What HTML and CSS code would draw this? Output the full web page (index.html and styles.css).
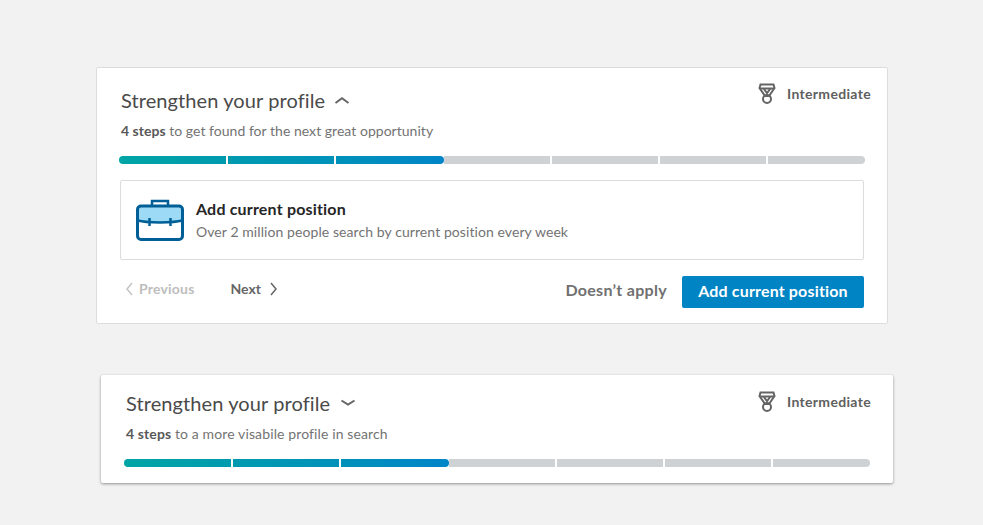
FILE: index.html
```html
<!DOCTYPE html>
<html lang="en">
<head>
<meta charset="utf-8">
<title>Strengthen your profile</title>
<link rel="stylesheet" href="styles.css">
</head>
<body>
<section class="card card-open">
  <header class="head">
    <div class="head-text">
      <h2 class="title">Strengthen your profile
        <svg class="caret" width="16" height="8" viewBox="0 0 16 8"><path d="M1.500 7L8 2.200L14.500 7" fill="none" stroke="#666" stroke-width="2"/></svg>
      </h2>
      <p class="sub"><b>4 steps</b> to get found for the next great opportunity</p>
    </div>
    <div class="level">
      <svg class="medal" width="18" height="22" viewBox="0 0 18 22" fill="none" stroke="#646464" stroke-width="2"><path d="M2.500 1.500H15.500L16.500 5L11 13H7L1.500 5Z"/><path d="M2 5.500H16M5.500 5.500L9 10L12.500 5.500"/><circle cx="9" cy="16" r="4"/></svg>
      <span>Intermediate</span>
    </div>
  </header>
  <div class="bar">
    <i class="seg done"></i><i class="seg done s2"></i><i class="seg done s3"></i><i class="seg"></i><i class="seg"></i><i class="seg"></i><i class="seg"></i>
  </div>
  <div class="step">
    <svg class="case" width="48" height="42" viewBox="0 0 48 42"><path d="M2 7H46V21.500C38 24 10 24 2 21.500Z" fill="#9cdaf5"/><path d="M16 7V2H32V7" fill="none" stroke="#005f96" stroke-width="2.500"/><rect x="1.500" y="7" width="45" height="33.500" rx="3.500" fill="none" stroke="#005f96" stroke-width="3"/><path d="M2 21.500C10 24 38 24 46 21.500" fill="none" stroke="#005f96" stroke-width="2.500"/><path d="M13.500 19V27M34.500 19V27" fill="none" stroke="#005f96" stroke-width="2.500"/></svg>
    <div>
      <h3 class="step-title">Add current position</h3>
      <p class="step-sub">Over 2 million people search by current position every week</p>
    </div>
  </div>
  <footer class="foot">
    <div class="pager">
      <span class="nav off"><svg width="9" height="14" viewBox="0 0 9 14"><path d="M7 1L2 7L7 13" fill="none" stroke="#c4c4c4" stroke-width="1.500"/></svg>Previous</span>
      <span class="nav on">Next<svg width="9" height="14" viewBox="0 0 9 14"><path d="M2 1L7 7L2 13" fill="none" stroke="#666" stroke-width="1.500"/></svg></span>
    </div>
    <div class="actions">
      <span class="skip">Doesn’t apply</span>
      <button class="cta">Add current position</button>
    </div>
  </footer>
</section>
<section class="card card-closed">
  <header class="head">
    <div class="head-text">
      <h2 class="title">Strengthen your profile
        <svg class="caret" width="16" height="8" viewBox="0 0 16 8"><path d="M1.500 1.500L8 5.500L14.500 1.500" fill="none" stroke="#666" stroke-width="2"/></svg>
      </h2>
      <p class="sub"><b>4 steps</b> to a more visabile profile in search</p>
    </div>
    <div class="level">
      <svg class="medal" width="18" height="22" viewBox="0 0 18 22" fill="none" stroke="#646464" stroke-width="2"><path d="M2.500 1.500H15.500L16.500 5L11 13H7L1.500 5Z"/><path d="M2 5.500H16M5.500 5.500L9 10L12.500 5.500"/><circle cx="9" cy="16" r="4"/></svg>
      <span>Intermediate</span>
    </div>
  </header>
  <div class="bar">
    <i class="seg done"></i><i class="seg done s2"></i><i class="seg done s3"></i><i class="seg"></i><i class="seg"></i><i class="seg"></i><i class="seg"></i>
  </div>
</section>
</body>
</html>
```
FILE: styles.css
```css
* { box-sizing: border-box; }
html, body { margin: 0; height: 100%; overflow: hidden; }
body {
  background: #f2f2f2;
  padding: 67px 0 0 96px;
  font-family: "Lato", "Noto Sans", sans-serif;
  color: #666;
}
h2, h3, p { margin: 0; font-weight: 400; }
.card { background: #fff; border-radius: 2px; }
.card-open { width: 792px; height: 257px; border: 1px solid #dcdcdc; padding: 0 23px 0 22px; }
.card-closed {
  width: 792px; height: 108px; margin: 51px 0 0 5px; padding: 0 23px;
  box-shadow: 0 1px 3px rgba(0,0,0,.4);
}
.head { display: flex; justify-content: space-between; }
.head-text { padding: 18px 0 0 2px; }
.card-closed .head-text { padding-top: 14px; }
.title { font-size: 20px; line-height: 28px; letter-spacing: .09px; color: #4a4a4a; display: flex; align-items: center; gap: 9px; }
.card-closed .title { gap: 10px; }
.sub { font-size: 14px; line-height: 18px; margin-top: 8px; letter-spacing: .03px; color: #737373; }
.card-closed .sub { letter-spacing: .12px; }
.sub b { font-weight: 700; color: #595959; }
.level { display: flex; align-items: center; gap: 11px; font-size: 14px; font-weight: 700; letter-spacing: .33px; color: #5f5f5f; height: 22px; margin: 15px -7px 0 0; }
.level span { position: relative; top: -1px; }
.card-closed .level { margin-top: 16px; margin-right: -1px; }
.bar { display: grid; grid-template-columns: 109px repeat(5, 108px) 97px; height: 8px; margin-top: 16px; }
.seg { background: #cfd2d5; border-right: 2px solid #fff; display: block; }
.seg:first-child { border-radius: 4px 0 0 4px; }
.seg:last-child { border-right: 0; border-radius: 0 4px 4px 0; }
.seg.done { background: linear-gradient(90deg, #00a5a5, #009aaf); }
.seg.s2 { background: linear-gradient(90deg, #009aaf, #0091ba); }
.seg.s3 { background: linear-gradient(90deg, #0091ba, #0085c8); border-right: 0; border-radius: 0 4px 4px 0; }
.step { display: flex; align-items: center; gap: 12px; width: 744px; height: 80px; margin: 16px 0 0 1px; border: 1px solid #dcdcdc; border-radius: 2px; padding: 0 15px; }
.step-title { font-size: 16px; line-height: 20px; font-weight: 700; letter-spacing: .18px; color: #262626; position: relative; top: -1px; }
.step-sub { font-size: 14px; line-height: 18px; margin-top: 3px; letter-spacing: .08px; color: #737373; }
.foot { display: flex; justify-content: space-between; align-items: flex-start; width: 745px; margin-top: 16px; }
.pager { display: flex; gap: 36px; padding: 5px 0 0 6px; font-size: 14px; font-weight: 700; line-height: 16px; }
.nav { display: flex; align-items: center; gap: 6px; }
.nav.off { gap: 5px; color: #bdbdbd; letter-spacing: .2px; }
.nav.on { gap: 8px; color: #666; }
.actions { display: flex; align-items: flex-start; gap: 15px; }
.skip { font-size: 16px; line-height: 28px; font-weight: 700; letter-spacing: .3px; color: #707070; }
.cta { width: 182px; height: 32px; border: 0; border-radius: 2px; background: #0084c4; color: #fff; font: 700 16px/28px "Lato", "Noto Sans", sans-serif; letter-spacing: .16px; padding: 0 0 2px; }
```
